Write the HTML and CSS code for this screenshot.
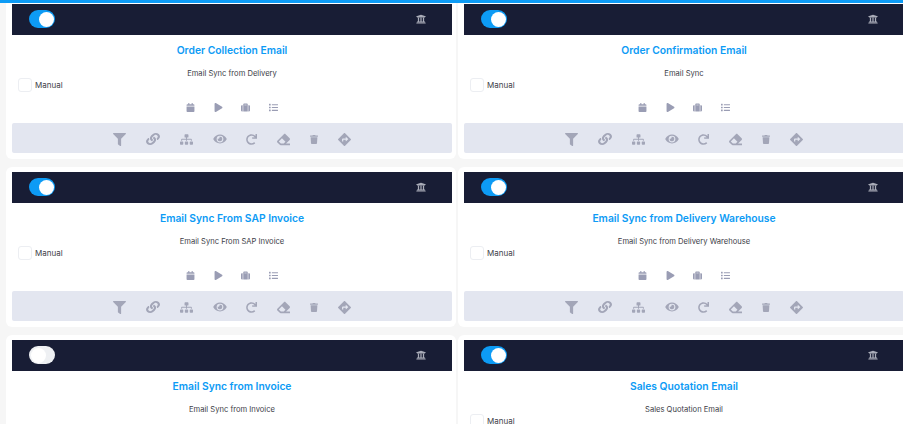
FILE: index.html
```html
<!DOCTYPE html>
<html lang="en">
<head>
<meta charset="utf-8">
<title>Email Sync</title>
<link rel="stylesheet" href="styles.css">
</head>
<body>
<svg class="defs" width="0" height="0" aria-hidden="true">
<symbol id="i-filter" viewBox="0 0 512 512"><path d="M487.976 0H24.028C2.71 0-8.047 25.866 7.058 40.971L192 225.941V432c0 7.831 3.821 15.17 10.237 19.662l80 55.98C298.02 518.69 320 507.493 320 487.98V225.941l184.947-184.97C520.021 25.896 509.338 0 487.976 0z"/></symbol>
<symbol id="i-link" viewBox="0 0 512 512" preserveAspectRatio="none"><path d="M326.612 185.391c59.747 59.809 58.927 155.698.36 214.59-.11.12-.24.25-.36.37l-67.2 67.2c-59.27 59.27-155.699 59.262-214.96 0-59.27-59.26-59.27-155.7 0-214.96l37.106-37.106c9.84-9.84 26.786-3.3 27.294 10.606.648 17.722 3.826 35.527 9.69 52.721 1.986 5.822.567 12.262-3.783 16.612l-13.087 13.087c-28.026 28.026-28.905 73.66-1.155 101.96 28.024 28.579 74.086 28.749 102.325.51l67.2-67.19c28.191-28.191 28.073-73.757 0-101.83-3.701-3.694-7.429-6.564-10.341-8.569a16.037 16.037 0 0 1-6.947-12.606c-.396-10.567 3.348-21.456 11.698-29.806l21.054-21.055c5.521-5.521 14.182-6.199 20.584-1.731a152.482 152.482 0 0 1 20.522 17.197zM467.547 44.449c-59.261-59.262-155.69-59.27-214.96 0l-67.2 67.2c-.12.12-.25.25-.36.37-58.566 58.892-59.387 154.781.36 214.59a152.454 152.454 0 0 0 20.521 17.196c6.402 4.468 15.064 3.789 20.584-1.731l21.054-21.055c8.35-8.35 12.094-19.239 11.698-29.806a16.037 16.037 0 0 0-6.947-12.606c-2.912-2.005-6.64-4.875-10.341-8.569-28.073-28.073-28.191-73.639 0-101.83l67.2-67.19c28.239-28.239 74.3-28.069 102.325.51 27.75 28.3 26.872 73.934-1.155 101.96l-13.087 13.087c-4.35 4.35-5.769 10.79-3.783 16.612 5.864 17.194 9.042 34.999 9.69 52.721.509 13.906 17.454 20.446 27.294 10.606l37.106-37.106c59.271-59.259 59.271-155.699.001-214.959z"/></symbol>
<symbol id="i-sitemap" viewBox="0 0 640 512"><path d="M128 352H32c-17.67 0-32 14.33-32 32v96c0 17.67 14.33 32 32 32h96c17.67 0 32-14.33 32-32v-96c0-17.67-14.33-32-32-32zm-24-80h192v48h48v-48h192v48h48v-57.59c0-21.17-17.23-38.41-38.41-38.41H344v-64h40c17.67 0 32-14.33 32-32V32c0-17.67-14.33-32-32-32H256c-17.67 0-32 14.33-32 32v96c0 17.67 14.33 32 32 32h40v64H94.41C73.23 224 56 241.23 56 262.41V320h48v-48zm264 80h-96c-17.67 0-32 14.33-32 32v96c0 17.67 14.33 32 32 32h96c17.67 0 32-14.33 32-32v-96c0-17.67-14.33-32-32-32zm240 0h-96c-17.67 0-32 14.33-32 32v96c0 17.67 14.33 32 32 32h96c17.67 0 32-14.33 32-32v-96c0-17.67-14.33-32-32-32z"/></symbol>
<symbol id="i-eye" viewBox="0 0 576 512"><path d="M572.52 241.4C518.29 135.59 410.93 64 288 64S57.68 135.64 3.48 241.41a32.35 32.35 0 0 0 0 29.19C57.71 376.41 165.07 448 288 448s230.32-71.64 284.52-177.41a32.35 32.35 0 0 0 0-29.19zM288 400a144 144 0 1 1 144-144 143.93 143.93 0 0 1-144 144zm0-240a95.31 95.31 0 0 0-25.31 3.79 47.85 47.85 0 0 1-66.9 66.9A95.78 95.78 0 1 0 288 160z"/></symbol>
<symbol id="i-redo" viewBox="0 0 512 512"><path d="M500.33 0h-47.41a12 12 0 0 0-12 12.57l4 82.76A247.42 247.42 0 0 0 256 8C119.34 8 7.9 119.53 8 256.19 8.1 393.07 119.1 504 256 504a247.1 247.1 0 0 0 166.18-63.91 12 12 0 0 0 .48-17.43l-34-34a12 12 0 0 0-16.38-.55A176 176 0 1 1 402.1 157.8l-101.53-4.87a12 12 0 0 0-12.57 12v47.41a12 12 0 0 0 12 12h200.33a12 12 0 0 0 12-12V12a12 12 0 0 0-12-12z"/></symbol>
<symbol id="i-eraser" viewBox="0 0 512 512"><path d="M497.941 273.941c18.745-18.745 18.745-49.137 0-67.882l-160-160c-18.745-18.745-49.136-18.746-67.883 0l-256 256c-18.745 18.745-18.745 49.137 0 67.882l96 96A48.004 48.004 0 0 0 144 480h356c6.627 0 12-5.373 12-12v-40c0-6.627-5.373-12-12-12H355.883l142.058-142.059zm-302.627-62.627l137.373 137.373L265.373 416H150.628l-80-80 124.686-124.686z"/></symbol>
<symbol id="i-trash" viewBox="0 0 448 512"><path d="M432 32H312l-9.4-18.7A24 24 0 0 0 281.1 0H166.8a23.72 23.72 0 0 0-21.4 13.3L136 32H16A16 16 0 0 0 0 48v32a16 16 0 0 0 16 16h416a16 16 0 0 0 16-16V48a16 16 0 0 0-16-16zM53.2 467a48 48 0 0 0 47.9 45h245.8a48 48 0 0 0 47.9-45L416 128H32z"/></symbol>
<symbol id="i-directions" viewBox="0 0 512 512"><path d="M502.61 233.32L278.68 9.39c-12.52-12.52-32.83-12.52-45.36 0L9.39 233.32c-12.52 12.53-12.52 32.83 0 45.36l223.93 223.93c12.52 12.53 32.83 12.53 45.36 0l223.93-223.93c12.52-12.53 12.52-32.83 0-45.36zm-100.98 12.56l-84.21 77.73c-5.12 4.73-13.43 1.1-13.43-5.88V264h-96v64c0 4.42-3.58 8-8 8h-32c-4.42 0-8-3.58-8-8v-80c0-17.67 14.33-32 32-32h112v-53.73c0-6.97 8.3-10.61 13.43-5.88l84.21 77.73c3.43 3.17 3.43 8.59 0 11.76z"/></symbol>
<symbol id="i-calendar" viewBox="0 0 448 512"><path d="M12 192h424c6.6 0 12 5.4 12 12v260c0 26.5-21.5 48-48 48H48c-26.5 0-48-21.5-48-48V204c0-6.6 5.4-12 12-12zm436-44v-36c0-26.5-21.5-48-48-48h-48V12c0-6.6-5.4-12-12-12h-40c-6.6 0-12 5.4-12 12v52H160V12c0-6.6-5.4-12-12-12h-40c-6.6 0-12 5.4-12 12v52H48C21.5 64 0 85.5 0 112v36c0 6.6 5.4 12 12 12h424c6.6 0 12-5.4 12-12z"/></symbol>
<symbol id="i-play" viewBox="0 0 448 512"><path d="M424.4 214.7L72.4 6.6C43.8-10.3 0 6.1 0 47.9V464c0 37.5 40.7 60.1 72.4 41.3l352-208c31.4-18.5 31.5-64.1 0-82.6z"/></symbol>
<symbol id="i-suitcase" viewBox="0 0 512 512"><path d="M128 480h256V80c0-26.5-21.5-48-48-48H176c-26.5 0-48 21.5-48 48v400zm64-384h128v32H192V96zm320 80v256c0 26.5-21.5 48-48 48h-48V128h48c26.5 0 48 21.5 48 48zM96 480H48c-26.5 0-48-21.5-48-48V176c0-26.5 21.5-48 48-48h48v352z"/></symbol>
<symbol id="i-list" viewBox="0 0 512 512"><path d="M80 368H16a16 16 0 0 0-16 16v64a16 16 0 0 0 16 16h64a16 16 0 0 0 16-16v-64a16 16 0 0 0-16-16zm0-320H16A16 16 0 0 0 0 64v64a16 16 0 0 0 16 16h64a16 16 0 0 0 16-16V64a16 16 0 0 0-16-16zm0 160H16a16 16 0 0 0-16 16v64a16 16 0 0 0 16 16h64a16 16 0 0 0 16-16v-64a16 16 0 0 0-16-16zm416 176H176a16 16 0 0 0-16 16v32a16 16 0 0 0 16 16h320a16 16 0 0 0 16-16v-32a16 16 0 0 0-16-16zm0-320H176a16 16 0 0 0-16 16v32a16 16 0 0 0 16 16h320a16 16 0 0 0 16-16V80a16 16 0 0 0-16-16zm0 160H176a16 16 0 0 0-16 16v32a16 16 0 0 0 16 16h320a16 16 0 0 0 16-16v-32a16 16 0 0 0-16-16z"/></symbol>
<symbol id="i-university" viewBox="0 0 512 512"><path d="M496 128v16a8 8 0 0 1-8 8h-24v12c0 6.627-5.373 12-12 12H60c-6.627 0-12-5.373-12-12v-12H24a8 8 0 0 1-8-8v-16a8 8 0 0 1 4.941-7.392l232-88a7.996 7.996 0 0 1 6.118 0l232 88A8 8 0 0 1 496 128zm-24 304H40c-13.255 0-24 10.745-24 24v16a8 8 0 0 0 8 8h464a8 8 0 0 0 8-8v-16c0-13.255-10.745-24-24-24zM96 192v192H60c-6.627 0-12 5.373-12 12v20h416v-20c0-6.627-5.373-12-12-12h-36V192h-64v192h-64V192h-64v192h-64V192H96z"/></symbol>
</svg>
<div class="topbar"></div>
<main class="board">

<article class="card">
  <header class="card-head"><span class="toggle on"><span class="knob"></span></span><svg class="bank"><use href="#i-university"/></svg></header>
  <h2 class="title">Order Collection Email</h2>
  <p class="desc">Email Sync from Delivery</p>
  <label class="manual"><span class="check"></span>Manual</label>
  <div class="tools"><svg class="t"><use href="#i-calendar"/></svg><svg class="t"><use href="#i-play"/></svg><svg class="t"><use href="#i-suitcase"/></svg><svg class="t"><use href="#i-list"/></svg></div>
  <footer class="actions"><svg class="a w13"><use href="#i-filter"/></svg><svg class="a w14"><use href="#i-link"/></svg><svg class="a w13"><use href="#i-sitemap"/></svg><svg class="a w14"><use href="#i-eye"/></svg><svg class="a w11"><use href="#i-redo"/></svg><svg class="a w13"><use href="#i-eraser"/></svg><svg class="a w8"><use href="#i-trash"/></svg><svg class="a w13"><use href="#i-directions"/></svg></footer>
</article>

<article class="card">
  <header class="card-head"><span class="toggle on"><span class="knob"></span></span><svg class="bank"><use href="#i-university"/></svg></header>
  <h2 class="title">Order Confirmation Email</h2>
  <p class="desc">Email Sync</p>
  <label class="manual"><span class="check"></span>Manual</label>
  <div class="tools"><svg class="t"><use href="#i-calendar"/></svg><svg class="t"><use href="#i-play"/></svg><svg class="t"><use href="#i-suitcase"/></svg><svg class="t"><use href="#i-list"/></svg></div>
  <footer class="actions"><svg class="a w13"><use href="#i-filter"/></svg><svg class="a w14"><use href="#i-link"/></svg><svg class="a w13"><use href="#i-sitemap"/></svg><svg class="a w14"><use href="#i-eye"/></svg><svg class="a w11"><use href="#i-redo"/></svg><svg class="a w13"><use href="#i-eraser"/></svg><svg class="a w8"><use href="#i-trash"/></svg><svg class="a w13"><use href="#i-directions"/></svg></footer>
</article>

<article class="card">
  <header class="card-head"><span class="toggle on"><span class="knob"></span></span><svg class="bank"><use href="#i-university"/></svg></header>
  <h2 class="title">Email Sync From SAP Invoice</h2>
  <p class="desc">Email Sync From SAP Invoice</p>
  <label class="manual"><span class="check"></span>Manual</label>
  <div class="tools"><svg class="t"><use href="#i-calendar"/></svg><svg class="t"><use href="#i-play"/></svg><svg class="t"><use href="#i-suitcase"/></svg><svg class="t"><use href="#i-list"/></svg></div>
  <footer class="actions"><svg class="a w13"><use href="#i-filter"/></svg><svg class="a w14"><use href="#i-link"/></svg><svg class="a w13"><use href="#i-sitemap"/></svg><svg class="a w14"><use href="#i-eye"/></svg><svg class="a w11"><use href="#i-redo"/></svg><svg class="a w13"><use href="#i-eraser"/></svg><svg class="a w8"><use href="#i-trash"/></svg><svg class="a w13"><use href="#i-directions"/></svg></footer>
</article>

<article class="card">
  <header class="card-head"><span class="toggle on"><span class="knob"></span></span><svg class="bank"><use href="#i-university"/></svg></header>
  <h2 class="title">Email Sync from Delivery Warehouse</h2>
  <p class="desc">Email Sync from Delivery Warehouse</p>
  <label class="manual"><span class="check"></span>Manual</label>
  <div class="tools"><svg class="t"><use href="#i-calendar"/></svg><svg class="t"><use href="#i-play"/></svg><svg class="t"><use href="#i-suitcase"/></svg><svg class="t"><use href="#i-list"/></svg></div>
  <footer class="actions"><svg class="a w13"><use href="#i-filter"/></svg><svg class="a w14"><use href="#i-link"/></svg><svg class="a w13"><use href="#i-sitemap"/></svg><svg class="a w14"><use href="#i-eye"/></svg><svg class="a w11"><use href="#i-redo"/></svg><svg class="a w13"><use href="#i-eraser"/></svg><svg class="a w8"><use href="#i-trash"/></svg><svg class="a w13"><use href="#i-directions"/></svg></footer>
</article>

<article class="card">
  <header class="card-head"><span class="toggle off"><span class="knob"></span></span><svg class="bank"><use href="#i-university"/></svg></header>
  <h2 class="title">Email Sync from Invoice</h2>
  <p class="desc">Email Sync from Invoice</p>
</article>

<article class="card">
  <header class="card-head"><span class="toggle on"><span class="knob"></span></span><svg class="bank"><use href="#i-university"/></svg></header>
  <h2 class="title">Sales Quotation Email</h2>
  <p class="desc">Sales Quotation Email</p>
  <label class="manual"><span class="check"></span>Manual</label>
</article>

</main>
</body>
</html>
```
FILE: styles.css
```css
* { box-sizing: border-box; }
html, body { margin: 0; height: 424px; overflow: hidden; }
body { background: #f6f6f6; font-family: Inter, "Liberation Sans", sans-serif; color: #3d4048; }
.defs { position: absolute; }
.topbar { position: absolute; top: 0; left: 0; right: 0; height: 3px; background: #0d9bf5; z-index: 2; }
.board {
  display: grid;
  grid-template-columns: 450px 450px;
  column-gap: 2px;
  row-gap: 8px;
  margin: -1px 0 0 6px;
  align-items: start;
}
.card { background: #fff; border-radius: 6px; padding: 5px 4px 5px 6px; height: 160px; }
.card-head {
  height: 30.5px;
  background: #181d35;
  display: flex;
  align-items: center;
  justify-content: space-between;
  padding: 0 26px 0 17px;
}
.toggle { width: 26px; height: 18px; border-radius: 9px; padding: 1.5px; display: flex; }
.toggle.on { background: #0d9bf5; justify-content: flex-end; }
.toggle.off { background: #eef0f3; justify-content: flex-start; }
.knob { width: 15px; height: 15px; border-radius: 50%; background: #fff; }
.bank { width: 10px; height: 10px; fill: #a9acb8; }
.title { margin: 8.5px 0 0; font-size: 10.3px; line-height: 14px; font-weight: 600; color: #0d9bf5; text-align: center; }
.desc { margin: 11px 0 0; font-size: 7.6px; line-height: 12px; text-align: center; }
.manual { display: flex; align-items: center; gap: 3px; margin: -2px 0 0 6px; height: 14px; font-size: 8px; }
.check { width: 14px; height: 14px; border: 1px solid #eceef2; border-radius: 3px; background: #fff; }
.tools { display: flex; justify-content: center; gap: 18.5px; margin-top: 11px; height: 9px; }
.t { width: 9px; height: 9px; fill: #9a9db4; }
.actions {
  display: flex;
  justify-content: center;
  align-items: center;
  gap: 19.75px;
  height: 30px;
  padding-top: 2px;
  margin-top: 11px;
  background: #e3e6f0;
  border-radius: 2px;
}
.a { height: 13px; fill: #a3a6b8; }
.w8 { width: 8px; height: 9px; }
.w11 { width: 11px; height: 11px; }
.w13 { width: 13px; }
.w14 { width: 14px; height: 12px; }
```
